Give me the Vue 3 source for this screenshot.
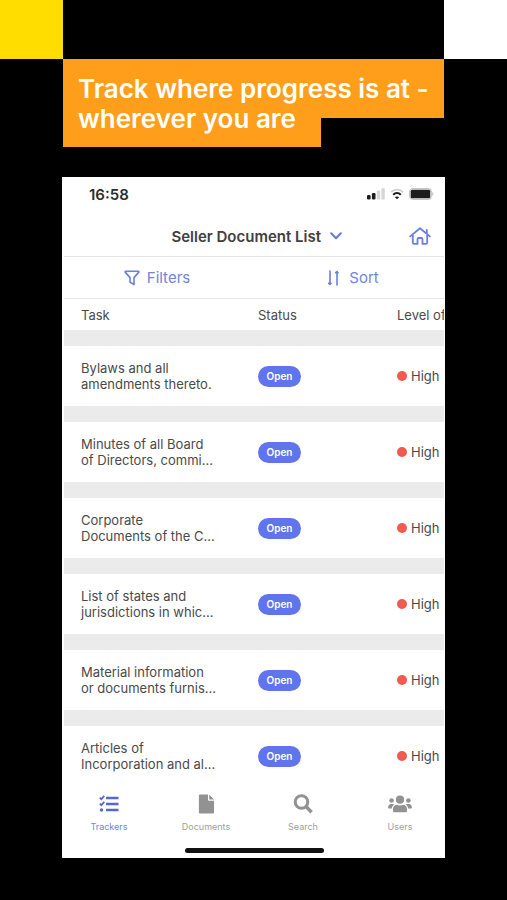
<script setup>
const rows = [
  ['Bylaws and all', 'amendments thereto.'],
  ['Minutes of all Board', 'of Directors, commi...'],
  ['Corporate', 'Documents of the C...'],
  ['List of states and', 'jurisdictions in whic...'],
  ['Material information', 'or documents furnis...'],
  ['Articles of', 'Incorporation and al...'],
]
</script>

<template>
  <main class="page">
    <div class="blocks">
      <span class="block yellow"></span>
      <span class="block white"></span>
    </div>
    <h1 class="banner">Track where progress is at -<br />wherever you are</h1>

    <section class="phone">
      <div class="statusbar">
        <span class="time">16:58</span>
        <span class="signals">
          <svg width="18" height="12" viewBox="0 0 18 12">
            <rect x="0" y="7" width="3.6" height="4.5" rx="1.2" fill="#1c1c1c" />
            <rect x="4.9" y="5" width="3.6" height="6.5" rx="1.2" fill="#1c1c1c" />
            <rect x="9.8" y="2.5" width="3.4" height="9" rx="1" fill="#d6d6d6" />
            <rect x="14.4" y="0.3" width="3.4" height="11.2" rx="1" fill="#d6d6d6" />
          </svg>
          <svg width="14" height="12" viewBox="0 0 14 12" fill="none">
            <path d="M1 4.2C4.4.8 9.6.8 13 4.2" stroke="#cfcfcf" stroke-width="1.8" />
            <path d="M3.2 6.7c2.2-2.1 5.4-2.1 7.6 0" stroke="#1c1c1c" stroke-width="2.1" />
            <path d="M7 11.3 4.9 9.2c1.2-1.1 3-1.1 4.2 0z" fill="#1c1c1c" />
          </svg>
          <svg width="25" height="12" viewBox="0 0 25 12">
            <rect x="0.7" y="0.7" width="21.5" height="10.6" rx="3" fill="#fff" stroke="#c4c4c4" stroke-width="1.2" />
            <rect x="1.7" y="1.7" width="19.5" height="8.6" rx="1.5" fill="#1c1c1c" />
            <path d="M23.3 4v4c1.5-.6 1.5-3.4 0-4z" fill="#b9b9b9" />
          </svg>
        </span>
      </div>

      <header class="titlebar">
        <button class="picker" type="button">
          Seller Document List
          <svg width="12" height="8" viewBox="0 0 12 8" fill="none" stroke="#6479d8" stroke-width="2" stroke-linecap="round" stroke-linejoin="round">
            <path d="M1.2 1.3 6 6.3l4.8-5" />
          </svg>
        </button>
        <a class="home" href="#" aria-label="Home">
          <svg width="22" height="18" viewBox="0 0 22 18" fill="none" stroke="#6b7ee0" stroke-width="1.8" stroke-linecap="round" stroke-linejoin="round">
            <path d="M1.2 9.4 11 1.2l9.8 8.2M17.8 6.2V2.9M3.8 8v7.6c0 .8.500 1.300 1.300 1.300h3.400v-4.600c0-.8.500-1.300 1.300-1.300h2.400c.8 0 1.300.5 1.300 1.300v4.600h3.400c.8 0 1.300-.5 1.300-1.300V8" />
          </svg>
        </a>
      </header>

      <div class="tools">
        <button class="tool filters" type="button">
          <svg width="16" height="16" viewBox="0 0 16 16" fill="none" stroke="#6b7ee0" stroke-width="1.6" stroke-linejoin="round">
            <path d="M1.6 1.2h12.8c.5 0 .7.5.4.9L10 7.6v7L6 12V7.600L1.2 2.100c-.3-.4-.1-.9.4-.9z" />
          </svg>
          Filters
        </button>
        <button class="tool sort" type="button">
          <svg width="13" height="16" viewBox="0 0 13 16" fill="#6b7ee0" stroke="#6b7ee0" stroke-width="1.6" stroke-linecap="round" stroke-linejoin="round">
            <path d="M3 1v13" />
            <path d="M10 15V2" />
            <path d="M1.500 13h3L3 14.800zM8.500 3h3L10 1.200z" stroke-width="1" />
          </svg>
          Sort
        </button>
      </div>

      <div class="list">
        <table>
          <thead>
            <tr>
              <th class="task" scope="col">Task</th>
              <th class="state" scope="col">Status</th>
              <th class="level" scope="col">Level of</th>
            </tr>
          </thead>
          <tbody>
            <tr v-for="row in rows" :key="row[0]">
              <td class="task">{{ row[0] }}<br />{{ row[1] }}</td>
              <td class="state"><span class="pill">Open</span></td>
              <td class="level"><span class="rating"><i class="dot"></i>High</span></td>
            </tr>
          </tbody>
        </table>
      </div>

      <nav class="tabs">
        <a class="tab active" href="#">
          <svg width="20" height="20" viewBox="0 0 20 20" fill="none" stroke="#5468d0" stroke-width="2.4">
            <path d="M7 4h12.500M7 10h12.500M7 16h12.500" />
            <path d="m.8 3.700 1.500 1.500L5.300 1.900M.8 9.700l1.500 1.500 3-3.300" stroke-width="1.8" />
            <circle cx="2.5" cy="16" r="1.7" fill="#5468d0" stroke="none" />
          </svg>
          Trackers
        </a>
        <a class="tab" href="#">
          <svg width="20" height="20" viewBox="0 0 20 20" fill="#929292">
            <path d="M3.800.5H12v5.300c0 .6.300.9.900.9H18v11.900c0 .6-.4.900-.9.900H3.800c-.5 0-.9-.3-.9-.9V1.400c0-.5.400-.9.900-.9zM13.200.5l4.800 5h-4.800z" />
          </svg>
          Documents
        </a>
        <a class="tab" href="#">
          <svg width="20" height="20" viewBox="0 0 20 20" fill="none" stroke="#929292">
            <circle cx="8.500" cy="8" r="6.300" stroke-width="3" />
            <path d="m13 12.500 5.600 5.700" stroke-width="3.400" />
          </svg>
          Search
        </a>
        <a class="tab" href="#">
          <svg width="24" height="20" viewBox="0 0 24 20" fill="#929292">
            <circle cx="12" cy="5.700" r="4.100" />
            <circle cx="3.600" cy="6.500" r="2.300" />
            <circle cx="20.400" cy="6.500" r="2.300" />
            <path d="M5 17v-2c0-2.500 1.800-4.200 4.100-4.200.8.400 1.800.6 2.900.6s2.100-.2 2.900-.6c2.300 0 4.100 1.700 4.100 4.200v2c0 .7-.5 1.200-1.200 1.200H6.200C5.500 18.200 5 17.700 5 17zM.1 13.200c0-2 1.200-3.300 2.900-3.300h1.700c.7 0 1.300.2 1.800.7-1.500.9-2.400 2.100-2.700 3.900H1.100c-.6 0-1-.5-1-1.300zM23.900 13.200c0-2-1.200-3.300-2.900-3.300h-1.700c-.7 0-1.300.2-1.800.7 1.500.9 2.400 2.100 2.700 3.900h2.700c.6 0 1-.5 1-1.300z" />
          </svg>
          Users
        </a>
      </nav>
      <div class="indicator"></div>
    </section>
  </main>
</template>

<style>
body {
  margin: 0;
  background: #000;
}
</style>

<style scoped>
.page {
  font-family: Inter, "Liberation Sans", sans-serif;
  color: #4a4a4a;
  background: #000;
}
.blocks {
  display: flex;
  justify-content: space-between;
}
.block {
  width: 63px;
  height: 59px;
}
.yellow {
  background: #ffdd00;
}
.white {
  background: #fff;
}
.banner {
  margin: 0 63px;
  padding: 15px 0 13px 15px;
  color: #fff;
  font-size: 26px;
  line-height: 30px;
  font-weight: 600;
  white-space: nowrap;
  background:
    linear-gradient(#ff9e1b, #ff9e1b) 0 0 / 100% 59px no-repeat,
    linear-gradient(#ff9e1b, #ff9e1b) 0 0 / 258px 100% no-repeat;
}
.phone {
  margin: 30px 62px 0;
  padding: 0 1px 5px 2px;
  background: #fff;
}
.statusbar {
  display: flex;
  justify-content: space-between;
  align-items: center;
  height: 34px;
  padding: 0 10px 0 25px;
}
.time {
  font-size: 15px;
  font-weight: 600;
  color: #2e2e2e;
}
.signals {
  display: flex;
  align-items: center;
  gap: 5px;
}
.titlebar {
  display: flex;
  justify-content: flex-end;
  align-items: center;
  gap: 67px;
  height: 40px;
  padding: 5px 13px 0 0;
  border-bottom: 1px solid #e4e4e4;
}
button {
  margin: 0;
  padding: 0;
  border: 0;
  background: none;
  font-family: inherit;
}
.picker {
  display: flex;
  align-items: center;
  gap: 9px;
  color: #404040;
  font-size: 15px;
  font-weight: 600;
}
.home {
  display: flex;
}
.tools {
  display: grid;
  grid-template-columns: 1fr 1fr;
  height: 41px;
  border-bottom: 1px solid #e4e4e4;
}
.tool {
  display: flex;
  align-items: center;
  justify-content: center;
  gap: 7px;
  color: #7384dc;
  font-size: 15px;
}
.filters {
  padding-right: 4px;
}
.sort {
  gap: 9px;
  padding-left: 8px;
}
.list {
  overflow: hidden;
}
table {
  width: 100%;
  table-layout: fixed;
  border-spacing: 0;
  font-size: 13px;
  line-height: 16px;
}
th,
td {
  padding: 0;
  text-align: left;
  vertical-align: middle;
  font-weight: 400;
  white-space: nowrap;
}
th {
  height: 31px;
}
td {
  height: 60px;
  border-top: 16px solid #ebebeb;
}
.task {
  width: 177px;
  padding-left: 17px;
}
.state {
  width: 139px;
}
.pill {
  display: inline-block;
  min-width: 43px;
  border-radius: 11px;
  background: #6074ee;
  color: #fff;
  font-size: 10px;
  line-height: 21px;
  font-weight: 600;
  text-align: center;
}
.rating {
  display: flex;
  align-items: center;
  gap: 4px;
}
.dot {
  width: 10px;
  height: 10px;
  border-radius: 50%;
  background: #f05a50;
}
.tabs {
  display: flex;
  justify-content: space-between;
  padding: 8px 16px 15px 17px;
}
.tab {
  display: flex;
  flex-direction: column;
  align-items: center;
  gap: 7px;
  width: 56px;
  color: #a0a0a0;
  font-size: 9px;
  line-height: 12px;
  text-decoration: none;
}
.active {
  color: #7384dc;
}
.indicator {
  width: 139px;
  height: 5px;
  margin: 0 auto;
  border-radius: 3px;
  background: #111;
}
</style>
